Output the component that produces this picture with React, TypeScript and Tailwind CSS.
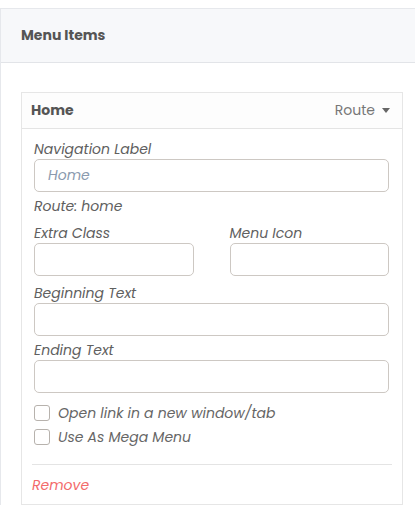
import React from 'react';

const font = { fontFamily: '"Poppins", "Open Sans", "DejaVu Sans", sans-serif' };

function Field({ label, placeholder }: { label: string; placeholder?: string }) {
  return (
    <div>
      <label className="block text-[14px] italic leading-5 text-[#606060]">{label}</label>
      <input
        placeholder={placeholder}
        className="block h-[33px] w-full rounded-[5px] border border-[#cdc8c3] bg-white px-[13px] text-[14px] italic text-[#555] outline-none placeholder:text-[#8a9aae]"
      />
    </div>
  );
}

function Check({ label }: { label: string }) {
  return (
    <label className="flex h-[16px] items-center gap-2">
      <span className="h-[16px] w-[16px] rounded-[3px] border border-[#b7b2ad] bg-white" />
      <span className="text-[14px] italic text-[#666]">{label}</span>
    </label>
  );
}

export default function App() {
  return (
    <div className="h-[512px] w-[415px] overflow-hidden bg-white pt-2" style={font}>
      <div className="border-l border-t border-[#e6e8ec]">
        <div className="flex h-[54px] items-center border-b border-[#e2e4e8] bg-[#f7f8fa] px-5">
          <h2 className="text-[14px] font-bold text-[#555]">Menu Items</h2>
        </div>

        <div className="pl-5 pt-[29px]">
          <div className="w-[382px] border border-[#e6e6e6]">
            <div className="flex h-[36px] items-center justify-between border-b border-[#e4e4e4] bg-[#fdfdfd] pl-[9px] pr-3">
              <span className="text-[14px] font-bold text-[#555]">Home</span>
              <span className="flex items-center gap-[7px] text-[14px] text-[#777]">
                Route
                <svg width="8" height="5" viewBox="0 0 8 5">
                  <path d="M0 0h8L4 5z" fill="#666" />
                </svg>
              </span>
            </div>

            <div className="pl-[12px] pr-[13px] pt-[10px] pb-[9px]">
              <Field label="Navigation Label" placeholder="Home" />
              <div className="mt-[4px] text-[14px] italic leading-5 text-[#606060]">Route: home</div>

              <div className="mt-[7px] grid grid-cols-2 gap-9">
                <Field label="Extra Class" />
                <Field label="Menu Icon" />
              </div>

              <div className="mt-[7px]">
                <Field label="Beginning Text" />
              </div>
              <div className="mt-[4px]">
                <Field label="Ending Text" />
              </div>

              <div className="mt-[12px] flex flex-col gap-[8px]">
                <Check label="Open link in a new window/tab" />
                <Check label="Use As Mega Menu" />
              </div>

              <div className="-ml-[2px] -mr-[3px] mt-[19px] border-t border-[#e4e4e4]" />

              <div className="-ml-[2px] mt-[10px] text-[14px] leading-5 italic text-[#f36b6b]">Remove</div>
            </div>
          </div>
        </div>
      </div>
    </div>
  );
}
